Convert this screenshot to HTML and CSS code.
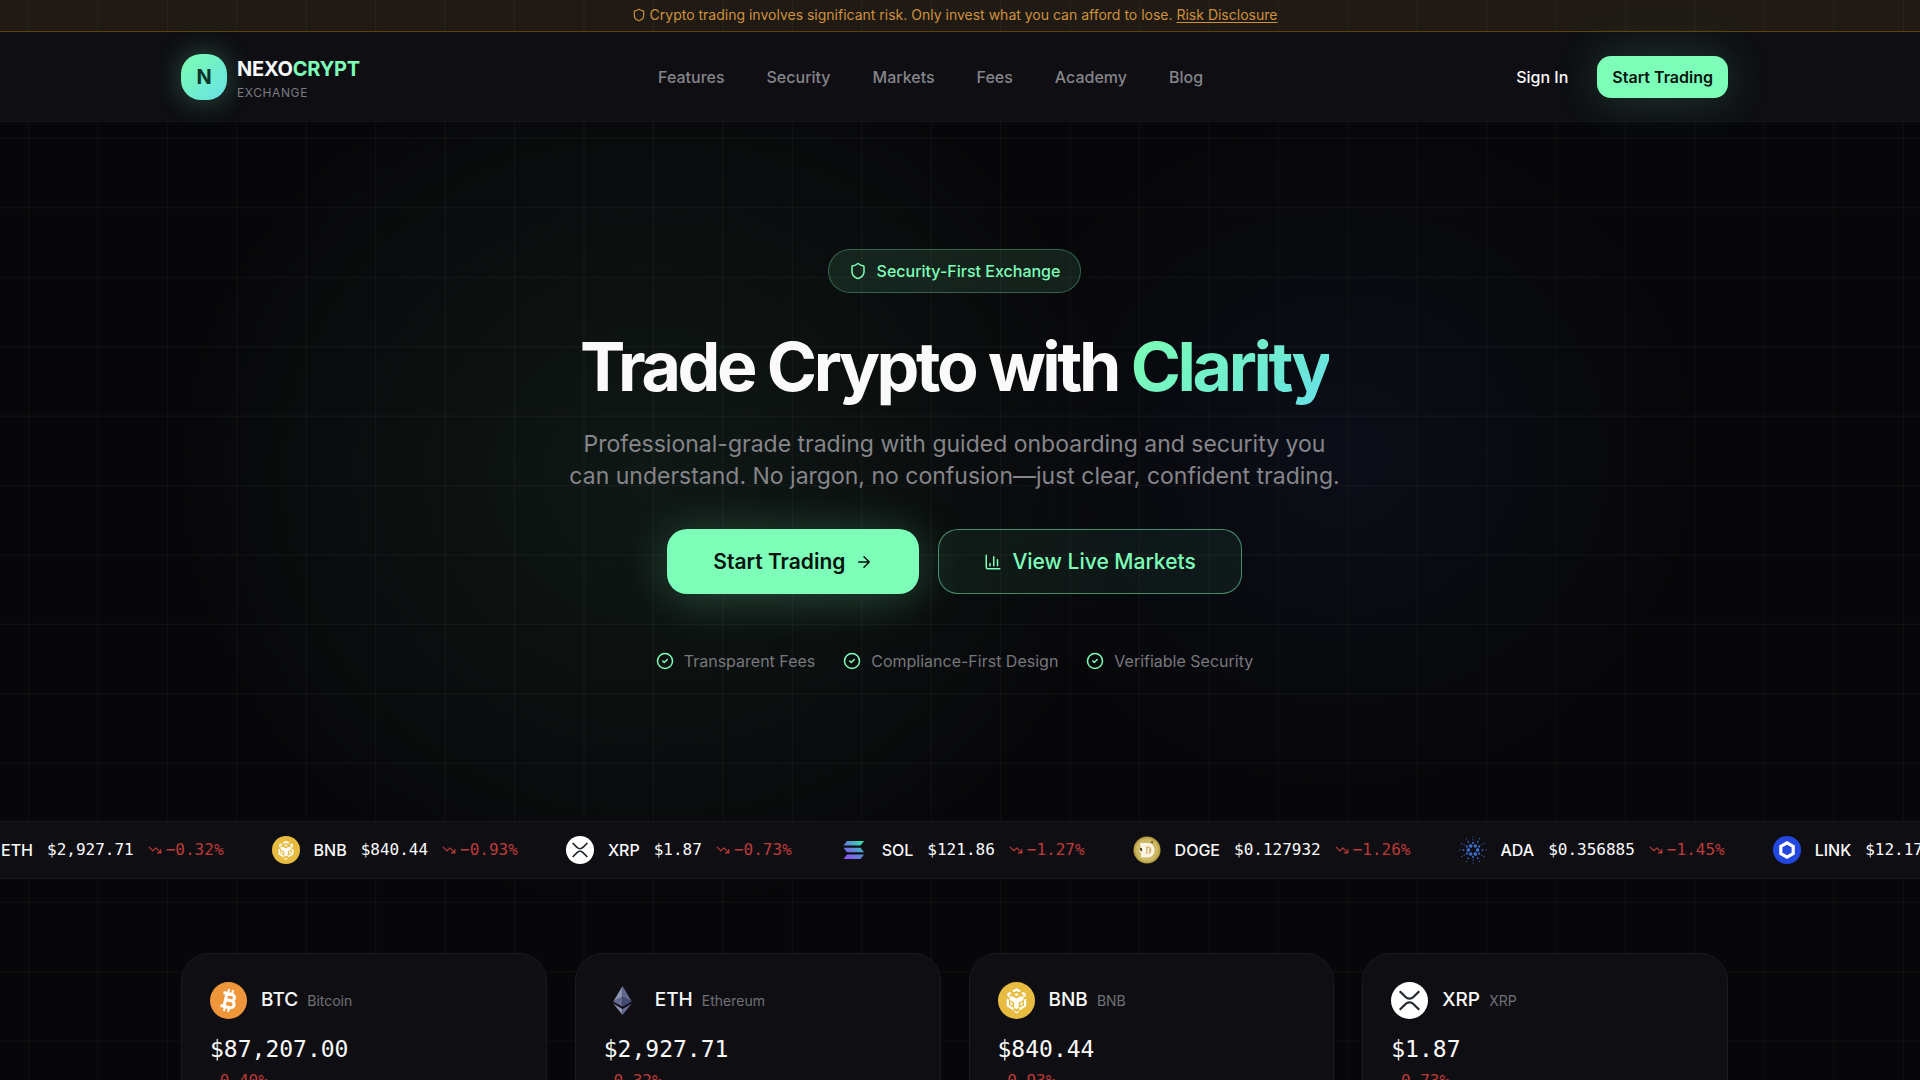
FILE: index.html
```html
<!DOCTYPE html>
<html lang="en">
<head>
    <meta charset="UTF-8">
    <meta name="viewport" content="width=device-width, initial-scale=1.0">
    <title>NexoCrypt Exchange</title>
    <link rel="stylesheet" href="styles.css">
</head>
<body>

    <!-- shared icons -->
    <svg class="sprite" aria-hidden="true">
        <defs>
            <linearGradient id="sol-grad" x1="0" y1="1" x2="1" y2="0">
                <stop offset="0" stop-color="#9945ff"/>
                <stop offset="0.5" stop-color="#5f87d8"/>
                <stop offset="1" stop-color="#2bf0a4"/>
            </linearGradient>
            <symbol id="shield" viewBox="0 0 24 24">
                <path d="M20 13c0 5-3.5 7.5-7.66 8.95a1 1 0 0 1-.67-.01C7.5 20.5 4 18 4 13V6a1 1 0 0 1 1-1c2 0 4.5-1.2 6.24-2.72a1.17 1.17 0 0 1 1.52 0C14.51 3.81 17 5 19 5a1 1 0 0 1 1 1z"/>
            </symbol>
            <symbol id="arrow" viewBox="0 0 24 24">
                <path d="M5 12h14M12 5l7 7-7 7"/>
            </symbol>
            <symbol id="chart" viewBox="0 0 24 24">
                <path d="M3 3v16a2 2 0 0 0 2 2h16M18 17V9M13 17V5M8 17v-3"/>
            </symbol>
            <symbol id="check" viewBox="0 0 24 24">
                <circle cx="12" cy="12" r="10"/>
                <path d="m9 12 2 2 4-4"/>
            </symbol>
            <symbol id="down" viewBox="0 0 24 24">
                <path d="M16 17h6v-6M22 17l-8.500-8.500-5 5L2 7"/>
            </symbol>
            <symbol id="btc" viewBox="0 0 36 36">
                <circle cx="18" cy="18" r="18" fill="#ef963b"/>
                <g transform="rotate(13 18 18)" fill="none" stroke="#fff">
                    <path stroke-width="3" d="M15 11.500v13M11.500 11.500h8.500a3 3 0 0 1 0 6.200H15M15 17.700h5.800a3.400 3.400 0 0 1 0 6.800H11.500"/>
                    <path stroke-width="2" d="M16 7v4M20 7v4M16 25v4M20 25v4"/>
                </g>
            </symbol>
            <symbol id="eth" viewBox="0 0 36 36">
                <path fill="#8a92b2" d="M18 4v10.500L9 19z"/>
                <path fill="#62688f" d="M18 4v10.500l9 4.500z"/>
                <path fill="#62688f" d="M18 14.500V24L9 19z"/>
                <path fill="#454a75" d="M18 14.500V24l9-5z"/>
                <path fill="#8a92b2" d="M9 21l9 5.200V32z"/>
                <path fill="#62688f" d="M27 21l-9 5.200V32z"/>
            </symbol>
            <symbol id="bnb" viewBox="0 0 36 36">
                <circle cx="18" cy="18" r="18" fill="#e8bb41"/>
                <g fill="#fff">
                    <path d="M18 6l4.500 2.600-2.200 1.300L18 8.600l-2.300 1.300-2.200-1.300z"/>
                    <path d="M11.300 9.800l2.200 1.300-2.200 1.300v2.600L9 13.700v-2.600zM24.700 9.800l-2.200 1.300 2.200 1.300v2.600l2.300-1.300v-2.600z"/>
                    <path d="M18 10.900l2.300 1.300L18 13.500l-2.300-1.300z"/>
                    <path d="M13.500 13.500l4.500 2.600 4.500-2.600 2.300 1.400v2.600L20.200 20v5.200L18 26.500l-2.200-1.300V20l-4.500-2.500v-2.600z"/>
                    <path d="M8.500 16l2.200 1.300v5.200l4.500 2.600v2.600l-6.700-4zM27.500 16l-2.200 1.300v5.200l-4.500 2.600v2.600l6.700-4z"/>
                    <path d="M12 19.300l2.200 1.300v2.600L12 21.900zM24 19.300l-2.200 1.300v2.600l2.200-1.300zM15.800 28l2.200 1.200 2.200-1.200v1.300L18 30.600l-2.200-1.300z"/>
                </g>
            </symbol>
            <symbol id="xrp" viewBox="0 0 36 36">
                <circle cx="18" cy="18" r="18" fill="#fff"/>
                <path fill="none" stroke="#23292f" stroke-width="2.200" d="M8.500 9l5.700 5.600a5.400 5.400 0 0 0 7.600 0L27.500 9M8.500 27l5.700-5.600a5.400 5.400 0 0 1 7.600 0l5.700 5.600"/>
            </symbol>
            <symbol id="sol" viewBox="0 0 28 28">
                <path fill="url(#sol-grad)" d="M7 5h17l-3.500 4.500H3.500zM3.500 11.700h17L24 16.200H7zM7 18.500h17L20.500 23H3.500z"/>
            </symbol>
            <symbol id="doge" viewBox="0 0 28 28">
                <circle cx="14" cy="14" r="13.500" fill="#b8a043"/>
                <circle cx="14" cy="14" r="11.500" fill="#cdb965"/>
                <path fill="#fbf5e3" d="M7 7h7.500c4.500 0 7 3 7 7s-2.500 7.500-7 7.500H8v-5H6.500v-3H8z"/>
                <path fill="#d9b77c" d="M13 10.500h2.500c2 0 3 1.500 3 3.500s-1 4-3 4H13z"/>
                <path fill="#fbf5e3" d="M14.500 12h1.500v6h-1.500z"/>
                <path fill="#5a4726" d="M7 12h2v3.500l-2-1zM17.500 6l2-1.500.5 3z"/>
            </symbol>
            <symbol id="ada" viewBox="0 0 28 28">
                <g id="ada-arm" fill="#3a6cc8">
                    <circle cx="16.300" cy="10" r="1.800"/>
                    <circle cx="14" cy="7" r="1.100"/>
                    <circle cx="18.800" cy="5.700" r="0.900"/>
                    <circle cx="14" cy="3.800" r="0.600"/>
                    <circle cx="14" cy="1" r="0.600"/>
                    <circle cx="20.500" cy="2.700" r="0.600"/>
                </g>
                <use href="#ada-arm" transform="rotate(60 14 14)"/>
                <use href="#ada-arm" transform="rotate(120 14 14)"/>
                <use href="#ada-arm" transform="rotate(180 14 14)"/>
                <use href="#ada-arm" transform="rotate(240 14 14)"/>
                <use href="#ada-arm" transform="rotate(300 14 14)"/>
            </symbol>
            <symbol id="link" viewBox="0 0 28 28">
                <circle cx="14" cy="14" r="14" fill="#2348e0"/>
                <path fill="none" stroke="#fff" stroke-width="3.200" d="M14 6.800l6.200 3.600v7.200L14 21.200l-6.200-3.600v-7.200z"/>
            </symbol>
        </defs>
    </svg>

    <div class="banner">
        <svg class="icon icon-sm"><use href="#shield"/></svg>
        <p>Crypto trading involves significant risk. Only invest what you can afford to lose. <a href="#">Risk Disclosure</a></p>
    </div>

    <header class="header">
        <div class="container header-inner">
            <a class="logo" href="#">
                <span class="logo-mark">N</span>
                <span class="logo-text">
                    <span class="logo-name">NEXO<span class="green">CRYPT</span></span>
                    <span class="logo-sub">EXCHANGE</span>
                </span>
            </a>
            <nav class="nav">
                <a href="#">Features</a>
                <a href="#">Security</a>
                <a href="#">Markets</a>
                <a href="#">Fees</a>
                <a href="#">Academy</a>
                <a href="#">Blog</a>
            </nav>
            <div class="actions">
                <button class="btn-text">Sign In</button>
                <button class="btn-small">Start Trading</button>
            </div>
        </div>
    </header>

    <main>
        <section class="hero">
            <div class="badge">
                <svg class="icon icon-md"><use href="#shield"/></svg>
                <span>Security-First Exchange</span>
            </div>
            <h1>Trade Crypto with <span class="gradient">Clarity</span></h1>
            <p class="lead">Professional-grade trading with guided onboarding and security you can understand. No jargon, no confusion—just clear, confident trading.</p>
            <div class="cta">
                <button class="btn btn-primary">Start Trading <svg class="icon icon-md"><use href="#arrow"/></svg></button>
                <button class="btn btn-outline"><svg class="icon icon-md"><use href="#chart"/></svg> View Live Markets</button>
            </div>
            <ul class="trust">
                <li><svg class="icon icon-md"><use href="#check"/></svg>Transparent Fees</li>
                <li><svg class="icon icon-md"><use href="#check"/></svg>Compliance-First Design</li>
                <li><svg class="icon icon-md"><use href="#check"/></svg>Verifiable Security</li>
            </ul>
        </section>

        <section class="ticker">
            <ul class="ticker-track">
                <li><svg class="coin"><use href="#eth"/></svg><b>ETH</b><span class="price">$2,927.71</span><span class="change"><svg class="icon icon-sm"><use href="#down"/></svg>−0.32%</span></li>
                <li><svg class="coin"><use href="#bnb"/></svg><b>BNB</b><span class="price">$840.44</span><span class="change"><svg class="icon icon-sm"><use href="#down"/></svg>−0.93%</span></li>
                <li><svg class="coin"><use href="#xrp"/></svg><b>XRP</b><span class="price">$1.87</span><span class="change"><svg class="icon icon-sm"><use href="#down"/></svg>−0.73%</span></li>
                <li><svg class="coin"><use href="#sol"/></svg><b>SOL</b><span class="price">$121.86</span><span class="change"><svg class="icon icon-sm"><use href="#down"/></svg>−1.27%</span></li>
                <li><svg class="coin"><use href="#doge"/></svg><b>DOGE</b><span class="price">$0.127932</span><span class="change"><svg class="icon icon-sm"><use href="#down"/></svg>−1.26%</span></li>
                <li><svg class="coin"><use href="#ada"/></svg><b>ADA</b><span class="price">$0.356885</span><span class="change"><svg class="icon icon-sm"><use href="#down"/></svg>−1.45%</span></li>
                <li><svg class="coin"><use href="#link"/></svg><b>LINK</b><span class="price">$12.17</span></li>
            </ul>
        </section>

        <section class="markets">
            <div class="container cards">
                <article class="card">
                    <div class="card-head"><svg class="coin-lg"><use href="#btc"/></svg><h2>BTC <small>Bitcoin</small></h2></div>
                    <p class="card-price">$87,207.00</p>
                    <p class="card-change">-0.40%</p>
                </article>
                <article class="card">
                    <div class="card-head"><svg class="coin-lg"><use href="#eth"/></svg><h2>ETH <small>Ethereum</small></h2></div>
                    <p class="card-price">$2,927.71</p>
                    <p class="card-change">-0.32%</p>
                </article>
                <article class="card">
                    <div class="card-head"><svg class="coin-lg"><use href="#bnb"/></svg><h2>BNB <small>BNB</small></h2></div>
                    <p class="card-price">$840.44</p>
                    <p class="card-change">-0.93%</p>
                </article>
                <article class="card">
                    <div class="card-head"><svg class="coin-lg"><use href="#xrp"/></svg><h2>XRP <small>XRP</small></h2></div>
                    <p class="card-price">$1.87</p>
                    <p class="card-change">-0.73%</p>
                </article>
            </div>
        </section>
    </main>

</body>
</html>
```
FILE: styles.css
```css
* {
    box-sizing: border-box;
    margin: 0;
    padding: 0;
}

body {
    height: 100vh;
    overflow: hidden;
    font-family: Inter, "Liberation Sans", sans-serif;
    font-size: 16px;
    line-height: 24px;
    color: #fafafa;
    background-color: #070709;
    /* grid lines first, then the two glows */
    background-image:
        linear-gradient(90deg, rgba(255, 255, 255, 0.04) 1px, transparent 1px),
        linear-gradient(rgba(255, 255, 255, 0.04) 1px, transparent 1px),
        radial-gradient(ellipse 480px 440px at 34% 44%, rgba(125, 255, 185, 0.07), transparent),
        radial-gradient(ellipse 360px 340px at 70% 42%, rgba(70, 130, 255, 0.06), transparent);
    background-size: 3.617vw 3.617vw, 3.617vw 3.617vw, 100% 100%, 100% 100%;
    background-position: 28px 0, 0 -1px, 0 0, 0 0;
}

button {
    font-family: inherit;
    border: 0;
    background: none;
    cursor: pointer;
}

a {
    color: inherit;
    text-decoration: none;
}

ul {
    list-style: none;
}

.sprite {
    position: absolute;
    width: 0;
    height: 0;
}

.icon {
    flex: none;
    fill: none;
    stroke: currentColor;
    stroke-width: 2;
    stroke-linecap: round;
    stroke-linejoin: round;
}

.icon-sm {
    width: 14px;
    height: 14px;
}

.icon-md {
    width: 18px;
    height: 18px;
}

.container {
    width: 100%;
    max-width: 1547px;
    margin: 0 auto;
}

.green {
    color: #7dffb9;
}

.banner,
.header,
.hero,
.markets {
    padding-right: 11px;
}

.banner {
    display: flex;
    align-items: center;
    justify-content: center;
    gap: 4px;
    height: 32px;
    padding-bottom: 2px;
    font-size: 14px;
    color: #d0913a;
    background: rgba(245, 197, 119, 0.1);
    border-bottom: 1px solid rgba(245, 158, 11, 0.3);
}

.banner a {
    text-decoration: underline;
    text-underline-offset: 2px;
}

.header {
    background: #0e0e13;
    border-bottom: 1px solid #14161a;
}

.header-inner {
    display: flex;
    align-items: center;
    justify-content: space-between;
    height: 89px;
}

.logo {
    display: flex;
    align-items: center;
    gap: 10px;
}

.logo-mark {
    width: 46px;
    height: 46px;
    border-radius: 20px;
    line-height: 46px;
    text-align: center;
    font-size: 20px;
    font-weight: 700;
    color: #0d3328;
    background: linear-gradient(135deg, #7dffb0, #66e0e6);
    box-shadow: 0 0 28px rgba(125, 255, 185, 0.3);
}

.logo-text {
    display: flex;
    flex-direction: column;
    padding-top: 4px;
}

.logo-name {
    font-size: 20px;
    line-height: 28px;
    font-weight: 700;
    letter-spacing: -0.01em;
}

.logo-sub {
    font-size: 12px;
    line-height: 20px;
    letter-spacing: 0.05em;
    color: #7a7a80;
}

.nav {
    display: flex;
    gap: 42px;
    font-weight: 500;
    color: #85858a;
}

.actions {
    display: flex;
    align-items: center;
    gap: 14px;
}

.btn-text,
.btn-small {
    height: 42px;
    padding: 0 15px;
    border-radius: 14px;
    font-size: 16px;
    font-weight: 500;
    color: #fafafa;
}

.btn-small {
    font-weight: 600;
    color: #07120c;
    background: #7dffb9;
    box-shadow: 0 0 46px rgba(125, 255, 185, 0.2);
}

.hero {
    display: flex;
    flex-direction: column;
    align-items: center;
    padding-top: 127px;
    padding-bottom: 148px;
    text-align: center;
}

.badge {
    display: flex;
    align-items: center;
    gap: 10px;
    height: 44px;
    padding: 0 20px;
    border: 1px solid rgba(125, 255, 185, 0.3);
    border-radius: 22px;
    font-weight: 500;
    color: #7dffb9;
    background: rgba(125, 255, 185, 0.1);
}

h1 {
    margin-top: 35px;
    font-size: 68px;
    line-height: 76px;
    font-weight: 700;
    letter-spacing: -0.05em;
}

.gradient {
    color: transparent;
    background: linear-gradient(135deg, #7dffb0, #66e0e6);
    background-clip: text;
    -webkit-background-clip: text;
}

.lead {
    max-width: 780px;
    margin-top: 24px;
    font-size: 23px;
    line-height: 32px;
    color: #85858a;
}

.cta {
    display: flex;
    gap: 19px;
    margin-top: 37px;
}

.btn {
    display: flex;
    align-items: center;
    gap: 10px;
    height: 65px;
    padding: 0 45px;
    border: 1px solid transparent;
    border-radius: 20px;
    font-size: 21px;
}

.btn-primary {
    font-weight: 600;
    color: #07120c;
    background: #7dffb9;
    box-shadow: 0 4px 46px rgba(125, 255, 185, 0.25);
}

.btn-outline {
    font-weight: 500;
    color: #7dffb9;
    border-color: rgba(125, 255, 185, 0.5);
    background: rgba(125, 255, 185, 0.06);
}

.trust {
    display: flex;
    gap: 28px;
    margin-top: 55px;
    color: #77777c;
}

.trust li {
    display: flex;
    align-items: center;
    gap: 10px;
}

.trust .icon {
    color: #7dffb9;
}

.ticker {
    overflow: hidden;
    background: #0e0e13;
    border-top: 1px solid #18181c;
    border-bottom: 1px solid #18181c;
}

.ticker-track {
    display: flex;
    gap: 48px;
    margin-left: -41px;
    padding: 14px 0;
}

.ticker-track li {
    display: flex;
    flex: none;
    align-items: center;
    gap: 14px;
    height: 28px;
}

.ticker-track b {
    font-weight: 500;
}

.coin {
    width: 28px;
    height: 28px;
}

.price,
.change,
.card-price,
.card-change {
    font-family: "DejaVu Sans Mono", "Liberation Mono", monospace;
}

.change {
    display: flex;
    align-items: center;
    gap: 4px;
    color: #bd3b38;
}

.markets {
    padding-top: 74px;
}

.cards {
    display: grid;
    grid-template-columns: repeat(4, 1fr);
    gap: 28px;
}

.card {
    padding: 28px;
    border: 1px solid #1b1b20;
    border-radius: 28px;
    background: #0f0f13;
}

.card-head {
    display: flex;
    align-items: center;
    gap: 14px;
}

.coin-lg {
    width: 37px;
    height: 37px;
}

.card h2 {
    font-size: 19px;
    font-weight: 500;
}

.card small {
    margin-left: 4px;
    font-size: 14px;
    font-weight: 400;
    color: #707076;
}

.card-price {
    margin-top: 14px;
    font-size: 23px;
    line-height: 32px;
}

.card-change {
    margin-top: 4px;
    color: #bd3b38;
}
```
